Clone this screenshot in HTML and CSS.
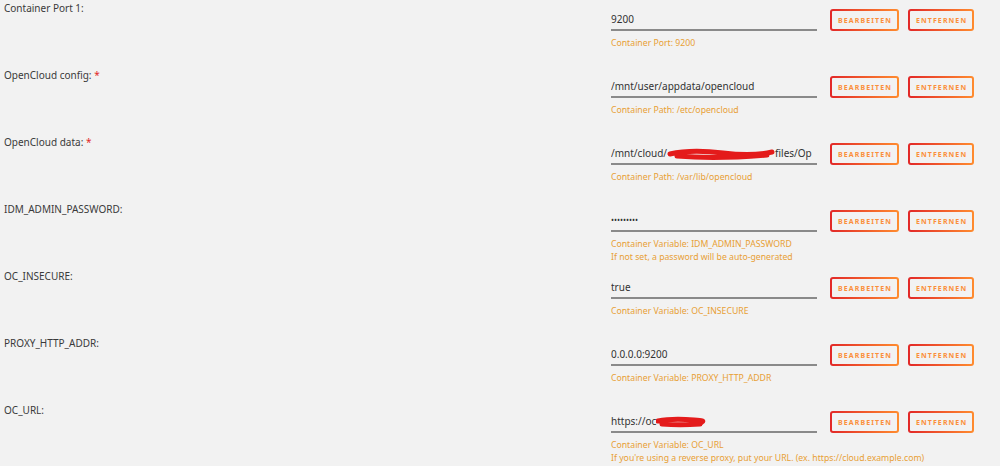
FILE: index.html
```html
<!DOCTYPE html>
<html lang="de">
<head>
    <meta charset="UTF-8">
    <title>Container Settings</title>
    <link rel="stylesheet" href="styles.css">
</head>
<body>
    <div class="config-list">
        <!-- Port -->
        <div class="config-row">
            <div class="config-label">Container Port 1:</div>
            <div class="config-field">
                <div class="field-line">
                    <div class="field-value">9200</div>
                    <button class="btn">Bearbeiten</button>
                    <button class="btn">Entfernen</button>
                </div>
                <div class="field-help">Container Port: 9200</div>
            </div>
        </div>

        <div class="config-row">
            <div class="config-label">OpenCloud config: <span class="required">*</span></div>
            <div class="config-field">
                <div class="field-line">
                    <div class="field-value">/mnt/user/appdata/opencloud</div>
                    <button class="btn">Bearbeiten</button>
                    <button class="btn">Entfernen</button>
                </div>
                <div class="field-help">Container Path: /etc/opencloud</div>
            </div>
        </div>

        <div class="config-row">
            <div class="config-label">OpenCloud data: <span class="required">*</span></div>
            <div class="config-field">
                <div class="field-line">
                    <div class="field-value">/mnt/cloud/<span class="redacted"><svg width="108" height="14" viewBox="0 0 108 14"><path d="M3 7 C20 3 40 4 56 6 S88 9 105 5 M10 9 C33 11 65 11 100 8" fill="none" stroke="#e41b1b" stroke-width="5" stroke-linecap="round"/></svg></span>files/Op</div>
                    <button class="btn">Bearbeiten</button>
                    <button class="btn">Entfernen</button>
                </div>
                <div class="field-help">Container Path: /var/lib/opencloud</div>
            </div>
        </div>

        <div class="config-row">
            <div class="config-label">IDM_ADMIN_PASSWORD:</div>
            <div class="config-field">
                <div class="field-line">
                    <div class="field-value password">&bull;&bull;&bull;&bull;&bull;&bull;&bull;&bull;&bull;</div>
                    <button class="btn">Bearbeiten</button>
                    <button class="btn">Entfernen</button>
                </div>
                <div class="field-help">Container Variable: IDM_ADMIN_PASSWORD<br>If not set, a password will be auto-generated</div>
            </div>
        </div>

        <div class="config-row">
            <div class="config-label">OC_INSECURE:</div>
            <div class="config-field">
                <div class="field-line">
                    <div class="field-value">true</div>
                    <button class="btn">Bearbeiten</button>
                    <button class="btn">Entfernen</button>
                </div>
                <div class="field-help">Container Variable: OC_INSECURE</div>
            </div>
        </div>

        <div class="config-row">
            <div class="config-label">PROXY_HTTP_ADDR:</div>
            <div class="config-field">
                <div class="field-line">
                    <div class="field-value">0.0.0.0:9200</div>
                    <button class="btn">Bearbeiten</button>
                    <button class="btn">Entfernen</button>
                </div>
                <div class="field-help">Container Variable: PROXY_HTTP_ADDR</div>
            </div>
        </div>

        <div class="config-row">
            <div class="config-label">OC_URL:</div>
            <div class="config-field">
                <div class="field-line">
                    <div class="field-value">https://oc<span class="redacted"><svg width="50" height="14" viewBox="0 0 50 14"><path d="M2 6 C12 4 25 4 38 5 S46 6 45 8 M6 9 C18 10 30 10 44 9" fill="none" stroke="#e41b1b" stroke-width="5" stroke-linecap="round"/></svg></span></div>
                    <button class="btn">Bearbeiten</button>
                    <button class="btn">Entfernen</button>
                </div>
                <div class="field-help">Container Variable: OC_URL<br>If you're using a reverse proxy, put your URL. (ex. https://cloud.example.com)</div>
            </div>
        </div>
    </div>
</body>
</html>
```

FILE: styles.css
```css
body {
    margin: 0;
    font-family: 'Noto Sans', 'Open Sans', sans-serif;
    font-size: 10px;
    background-color: #f2f2f2;
    color: #333;
}

.config-list {
    padding-left: 4px;
}

.config-row {
    display: grid;
    grid-template-columns: 607px 1fr;
    height: 67px;
}

.config-label {
    padding-top: 2px;
    line-height: 13px;
    color: #3a3a3a;
}

.required {
    color: #e22828;
}

.config-field {
    padding-top: 9px;
}

.field-line {
    display: flex;
    align-items: flex-start;
}

.field-value {
    width: 206px;
    height: 20px;
    line-height: 20px;
    border-bottom: 2px solid #8a8a8a;
    white-space: nowrap;
    overflow: hidden;
    color: #333;
    margin-right: 13px;
}

.field-value.password {
    font-size: 8px;
    letter-spacing: 0;
}

.redacted {
    display: inline-block;
    vertical-align: middle;
    line-height: 0;
}

.btn {
    height: 22px;
    padding: 0 5px 0 6px;
    margin-right: 9px;
    font-family: 'Noto Sans', sans-serif;
    font-size: 7px;
    font-weight: bold;
    letter-spacing: 1.1px;
    text-transform: uppercase;
    color: #fb8f3a;
    border: 2px solid transparent;
    border-radius: 3px;
    background: linear-gradient(#f2f2f2, #f2f2f2) padding-box,
                linear-gradient(90deg, #e22828, #ff8c2f) border-box;
    cursor: pointer;
}

.field-help {
    margin-top: 6px;
    font-size: 8.7px;
    line-height: 13px;
    color: #e8a035;
}
```
